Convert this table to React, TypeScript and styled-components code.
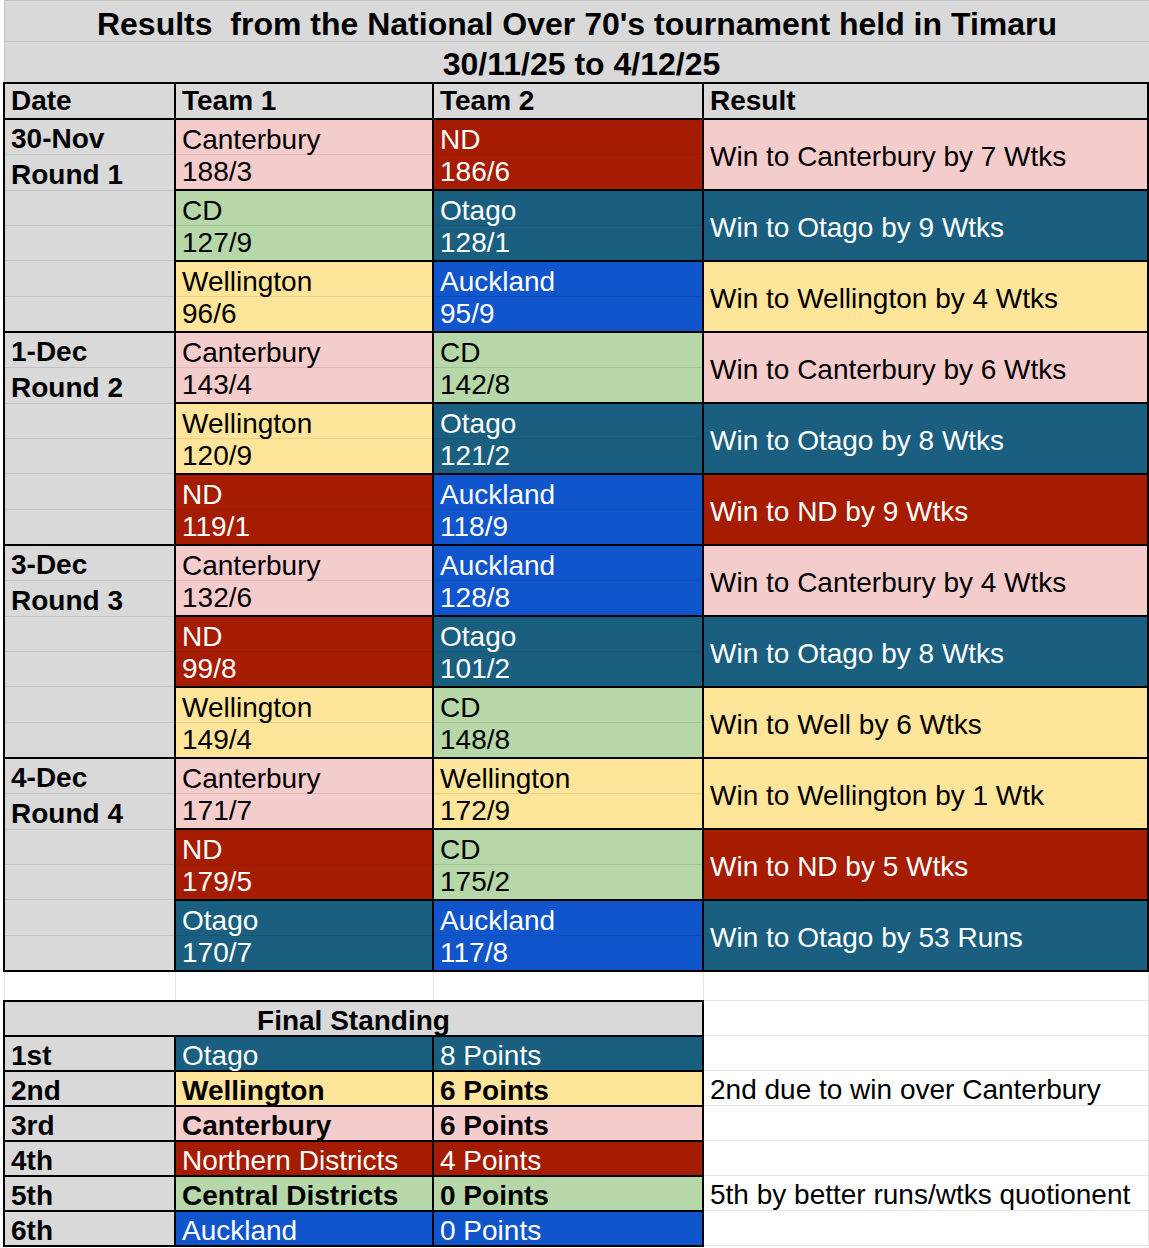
import React from "react";
import styled, { createGlobalStyle } from "styled-components";

const GlobalStyle = createGlobalStyle`
  *, *::before, *::after { box-sizing: border-box; }
  html, body { margin: 0; padding: 0; background: #ffffff; }
  body { font-family: "Liberation Sans", Arial, Helvetica, sans-serif; color: #000; }
`;

const GRAY = "#d9d9d9";
const GRID_DARK = "#c4c4c4";
const GRID_LIGHT = "#e2e3e3";

type TeamKey = "Canterbury" | "ND" | "CD" | "Otago" | "Wellington" | "Auckland";

const palette: Record<TeamKey, { bg: string; fg: string }> = {
  Canterbury: { bg: "#f4cccc", fg: "#000000" },
  ND: { bg: "#a61c00", fg: "#ffffff" },
  CD: { bg: "#b6d7a8", fg: "#000000" },
  Otago: { bg: "#1a5e80", fg: "#ffffff" },
  Wellington: { bg: "#ffe599", fg: "#000000" },
  Auckland: { bg: "#1155cc", fg: "#ffffff" },
};

const Sheet = styled.div`
  width: 1146px;
  margin-left: 3px;
  font-size: 28px;
`;

const TitleBlock = styled.div`
  margin-left: 1px;
  background: ${GRAY};
  border-left: 1px solid ${GRID_DARK};
`;

const TitleRow = styled.div<{ $h: number; $pb: number; $pl?: number; $top?: boolean; $bottom?: boolean }>`
  height: ${(p) => p.$h}px;
  display: flex;
  align-items: flex-end;
  justify-content: center;
  font-weight: bold;
  font-size: 32px;
  line-height: 1;
  white-space: pre;
  padding-bottom: ${(p) => p.$pb}px;
  padding-left: ${(p) => p.$pl ?? 0}px;
  border-top: ${(p) => (p.$top ? `1px solid ${GRID_DARK}` : "none")};
  border-bottom: ${(p) => (p.$bottom ? `1px solid ${GRID_DARK}` : "none")};
`;

const ResultsGrid = styled.div`
  display: grid;
  grid-template-columns: 169px 256px 268px 443px;
  grid-template-rows: 34px repeat(12, 69px);
  gap: 2px;
  padding: 2px;
  background: #000;
`;

const HeaderCell = styled.div`
  background: ${GRAY};
  display: flex;
  align-items: flex-end;
  padding: 0 6px 3px;
  font-weight: bold;
  line-height: 1;
`;

const DateBlock = styled.div`
  grid-row: span 3;
  background: ${GRAY};
  display: flex;
  flex-direction: column;
`;

const DateLine = styled.div`
  flex: 1;
  display: flex;
  align-items: flex-end;
  padding: 0 6px 1px;
  font-weight: bold;
  line-height: 1;
  & + & {
    border-top: 1px solid ${GRID_DARK};
  }
`;

const TeamCell = styled.div<{ $bg: string; $fg: string }>`
  background: linear-gradient(
      to bottom,
      transparent calc(50% - 0.5px),
      rgba(0, 0, 0, 0.09) calc(50% - 0.5px),
      rgba(0, 0, 0, 0.09) calc(50% + 0.5px),
      transparent calc(50% + 0.5px)
    ),
    ${(p) => p.$bg};
  color: ${(p) => p.$fg};
  display: flex;
  flex-direction: column;
  justify-content: flex-end;
  padding: 0 6px 1px;
  line-height: 1.149;
  white-space: nowrap;
`;

const ResultCell = styled.div<{ $bg: string; $fg: string }>`
  background: ${(p) => p.$bg};
  color: ${(p) => p.$fg};
  display: flex;
  align-items: center;
  padding: 5px 6px 0;
  line-height: 1.149;
  white-space: nowrap;
`;

const BlankRow = styled.div`
  height: 28px;
  margin-left: 1px;
  display: grid;
  grid-template-columns: 171px 258px 270px 1fr;
`;

const BlankCell = styled.div`
  border-left: 1px solid ${GRID_LIGHT};
  &:last-child {
    border-right: 1px solid ${GRID_LIGHT};
  }
`;

const Lower = styled.div`
  display: flex;
  align-items: flex-start;
`;

const StandingGrid = styled.div`
  display: grid;
  grid-template-columns: 169px 256px 268px;
  grid-auto-rows: 33px;
  gap: 2px;
  padding: 2px;
  background: #000;
  width: 701px;
  flex: none;
`;

const StandingHeader = styled.div`
  grid-column: 1 / -1;
  background: ${GRAY};
  display: flex;
  align-items: flex-end;
  justify-content: center;
  font-weight: bold;
  line-height: 1;
  padding-bottom: 0;
`;

const StandCell = styled.div<{ $bg: string; $fg: string; $bold?: boolean }>`
  background: ${(p) => p.$bg};
  color: ${(p) => p.$fg};
  font-weight: ${(p) => (p.$bold ? "bold" : "normal")};
  display: flex;
  align-items: flex-end;
  padding: 0 6px 0;
  line-height: 1;
  white-space: nowrap;
`;

const NotesColumn = styled.div`
  flex: 1;
  border-top: 1px solid ${GRID_LIGHT};
  border-right: 1px solid ${GRID_LIGHT};
`;

const NoteCell = styled.div`
  height: 35px;
  border-bottom: 1px solid ${GRID_LIGHT};
  display: flex;
  align-items: flex-end;
  padding: 0 6px 1px;
  line-height: 1;
  white-space: nowrap;
`;

type Match = { t1: TeamKey; s1: string; t2: TeamKey; s2: string; winner: TeamKey; result: string };
type Round = { date: string; label: string; matches: Match[] };

const m = (t1: TeamKey, s1: string, t2: TeamKey, s2: string, winner: TeamKey, result: string): Match => ({
  t1, s1, t2, s2, winner, result,
});

const rounds: Round[] = [
  {
    date: "30-Nov",
    label: "Round 1",
    matches: [
      m("Canterbury", "188/3", "ND", "186/6", "Canterbury", "Win to Canterbury by 7 Wtks"),
      m("CD", "127/9", "Otago", "128/1", "Otago", "Win to Otago by 9 Wtks"),
      m("Wellington", "96/6", "Auckland", "95/9", "Wellington", "Win to Wellington by 4 Wtks"),
    ],
  },
  {
    date: "1-Dec",
    label: "Round 2",
    matches: [
      m("Canterbury", "143/4", "CD", "142/8", "Canterbury", "Win to Canterbury by 6 Wtks"),
      m("Wellington", "120/9", "Otago", "121/2", "Otago", "Win to Otago by 8 Wtks"),
      m("ND", "119/1", "Auckland", "118/9", "ND", "Win to ND by 9 Wtks"),
    ],
  },
  {
    date: "3-Dec",
    label: "Round 3",
    matches: [
      m("Canterbury", "132/6", "Auckland", "128/8", "Canterbury", "Win to Canterbury by 4 Wtks"),
      m("ND", "99/8", "Otago", "101/2", "Otago", "Win to Otago by 8 Wtks"),
      m("Wellington", "149/4", "CD", "148/8", "Wellington", "Win to Well by 6 Wtks"),
    ],
  },
  {
    date: "4-Dec",
    label: "Round 4",
    matches: [
      m("Canterbury", "171/7", "Wellington", "172/9", "Wellington", "Win to Wellington by 1 Wtk"),
      m("ND", "179/5", "CD", "175/2", "ND", "Win to ND by 5 Wtks"),
      m("Otago", "170/7", "Auckland", "117/8", "Otago", "Win to Otago by 53 Runs"),
    ],
  },
];

type Standing = { rank: string; team: string; key: TeamKey; points: string; bold: boolean; note: string };

const standings: Standing[] = [
  { rank: "1st", team: "Otago", key: "Otago", points: "8 Points", bold: false, note: "" },
  { rank: "2nd", team: "Wellington", key: "Wellington", points: "6 Points", bold: true, note: "2nd due to win over Canterbury" },
  { rank: "3rd", team: "Canterbury", key: "Canterbury", points: "6 Points", bold: true, note: "" },
  { rank: "4th", team: "Northern Districts", key: "ND", points: "4 Points", bold: false, note: "" },
  { rank: "5th", team: "Central Districts", key: "CD", points: "0 Points", bold: true, note: "5th by better runs/wtks quotionent" },
  { rank: "6th", team: "Auckland", key: "Auckland", points: "0 Points", bold: false, note: "" },
];

export default function App() {
  return (
    <>
      <GlobalStyle />
      <Sheet>
        <TitleBlock>
          <TitleRow $h={42} $pb={1} $top $bottom>
            {"Results  from the National Over 70's tournament held in Timaru"}
          </TitleRow>
          <TitleRow $h={40} $pb={2} $pl={9}>
            30/11/25 to 4/12/25
          </TitleRow>
        </TitleBlock>

        <ResultsGrid>
          <HeaderCell>Date</HeaderCell>
          <HeaderCell>Team 1</HeaderCell>
          <HeaderCell>Team 2</HeaderCell>
          <HeaderCell>Result</HeaderCell>
          {rounds.map((r) => (
            <React.Fragment key={r.date}>
              <DateBlock>
                <DateLine>{r.date}</DateLine>
                <DateLine>{r.label}</DateLine>
                <DateLine />
                <DateLine />
                <DateLine />
                <DateLine />
              </DateBlock>
              {r.matches.map((mt, i) => (
                <React.Fragment key={i}>
                  <TeamCell $bg={palette[mt.t1].bg} $fg={palette[mt.t1].fg}>
                    <span>{mt.t1}</span>
                    <span>{mt.s1}</span>
                  </TeamCell>
                  <TeamCell $bg={palette[mt.t2].bg} $fg={palette[mt.t2].fg}>
                    <span>{mt.t2}</span>
                    <span>{mt.s2}</span>
                  </TeamCell>
                  <ResultCell $bg={palette[mt.winner].bg} $fg={palette[mt.winner].fg}>
                    {mt.result}
                  </ResultCell>
                </React.Fragment>
              ))}
            </React.Fragment>
          ))}
        </ResultsGrid>

        <BlankRow>
          <BlankCell />
          <BlankCell />
          <BlankCell />
          <BlankCell />
        </BlankRow>

        <Lower>
          <StandingGrid>
            <StandingHeader>Final Standing</StandingHeader>
            {standings.map((s) => (
              <React.Fragment key={s.rank}>
                <StandCell $bg={GRAY} $fg="#000" $bold>
                  {s.rank}
                </StandCell>
                <StandCell $bg={palette[s.key].bg} $fg={palette[s.key].fg} $bold={s.bold}>
                  {s.team}
                </StandCell>
                <StandCell $bg={palette[s.key].bg} $fg={palette[s.key].fg} $bold={s.bold}>
                  {s.points}
                </StandCell>
              </React.Fragment>
            ))}
          </StandingGrid>
          <NotesColumn>
            <NoteCell />
            {standings.map((s) => (
              <NoteCell key={s.rank}>{s.note}</NoteCell>
            ))}
          </NotesColumn>
        </Lower>
      </Sheet>
    </>
  );
}
